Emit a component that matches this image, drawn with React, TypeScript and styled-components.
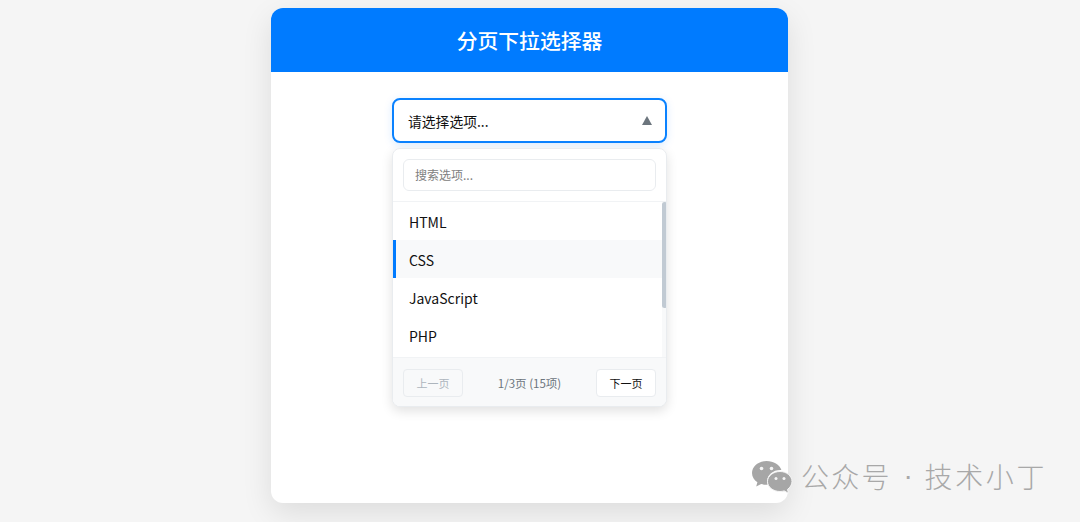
import { createGlobalStyle, styled } from "styled-components";

const GlobalStyle = createGlobalStyle`
  html, body {
    margin: 0;
    height: 522px;
    overflow: hidden;
    background: #f5f5f5;
    font-family: "Noto Sans CJK SC", "Noto Sans", sans-serif;
  }
  * {
    box-sizing: border-box;
  }
`;

const Page = styled.div`
  height: 522px;
  padding: 8px 21px 0 0;
  display: flex;
  justify-content: center;
  align-items: flex-start;
`;

const Card = styled.div`
  width: 517px;
  height: 495px;
  background: #fff;
  border-radius: 12px;
  box-shadow: 0 10px 30px rgba(0, 0, 0, 0.1);
  overflow: hidden;
`;

const Header = styled.h1`
  margin: 0;
  height: 64px;
  background: #007bff;
  color: #fff;
  font-size: 20.8px;
  font-weight: 500;
  line-height: 65px;
  text-align: center;
`;

const Body = styled.div`
  padding: 26px 121px 0;
  display: flex;
  flex-direction: column;
  gap: 5px;
`;

const Select = styled.div`
  height: 45px;
  padding: 0 14px;
  display: flex;
  align-items: center;
  justify-content: space-between;
  background: #fff;
  border: 2px solid #0a82ff;
  border-radius: 8px;
  box-shadow: 0 2px 8px rgba(0, 123, 255, 0.15);
  font-size: 13.8px;
  color: #111;
`;

const Arrow = styled.span`
  width: 0;
  height: 0;
  margin-right: -1px;
  border-left: 5.5px solid transparent;
  border-right: 5.5px solid transparent;
  border-bottom: 9px solid #6c757d;
`;

const Dropdown = styled.div`
  height: 259px;
  background: #fff;
  border: 1px solid #e9ecef;
  border-radius: 8px;
  box-shadow: 0 4px 12px rgba(0, 0, 0, 0.12);
  overflow: hidden;
  display: flex;
  flex-direction: column;
`;

const SearchBox = styled.div`
  height: 53px;
  padding: 10px 10px 0;
  border-bottom: 1px solid #f1f3f5;
`;

const SearchInput = styled.input`
  display: block;
  width: 100%;
  height: 32px;
  padding: 0 11px 2px;
  border: 1px solid #e9ecef;
  border-radius: 6px;
  outline: none;
  font-family: inherit;
  font-size: 12px;
  color: #212529;
  &::placeholder {
    color: #808080;
  }
`;

const ListArea = styled.div`
  position: relative;
  flex: 1;
  min-height: 0;
  padding-right: 4px;
  background: #f8f9fa;
`;

const List = styled.ul`
  margin: 0;
  padding: 0;
  height: 100%;
  list-style: none;
  background: #fff;
`;

const ScrollThumb = styled.div`
  position: absolute;
  top: 0;
  right: -1px;
  width: 5px;
  height: 106px;
  background: #c1cad3;
  border-radius: 3px;
`;

const Item = styled.li<{ $active?: boolean }>`
  height: 38px;
  padding: 2px 0 0 13px;
  display: flex;
  align-items: center;
  border-left: 3px solid ${(p) => (p.$active ? "#007bff" : "transparent")};
  background: ${(p) => (p.$active ? "#f8f9fa" : "#fff")};
  font-size: 14px;
  color: #111;
`;

const Footer = styled.div`
  height: 49px;
  padding: 2px 10px 0;
  display: flex;
  align-items: center;
  justify-content: space-between;
  background: #f8f9fa;
  border-top: 1px solid #f1f3f5;
`;

const PageButton = styled.button`
  width: 60px;
  height: 28px;
  padding: 0;
  background: #fff;
  border: 1px solid #e9ecef;
  border-radius: 4px;
  font-family: inherit;
  font-size: 11px;
  color: #111;
  &:disabled {
    background: #f8f9fa;
    color: #adb5bd;
  }
`;

const PageInfo = styled.span`
  font-size: 11.5px;
  color: #6c757d;
`;

const Watermark = styled.div`
  position: absolute;
  left: 751px;
  top: 459px;
  display: flex;
  align-items: center;
  color: #a8a8a8;
  font-size: 28px;
  font-weight: 300;
  letter-spacing: 2.2px;
  white-space: nowrap;
  line-height: 38px;
`;

const Label = styled.span`
  margin-top: -2px;
`;

const Account = styled(Label)`
  margin-left: 8px;
`;

const Dot = styled(Label)`
  width: 33px;
  text-align: center;
  font-family: "Liberation Sans", sans-serif;
  letter-spacing: 0;
`;

const Author = styled(Label)`
  letter-spacing: 2.6px;
`;

const options = ["HTML", "CSS", "JavaScript", "PHP"];

function WeChatIcon() {
  return (
    <svg width="42" height="34" viewBox="0 0 42 34">
      <path
        d="M15.5 1C7.5 1 1 6.3 1 13c0 3.8 2.1 7.1 5.4 9.3L5.2 26.6l5-2.6c1.7.5 3.4.8 5.3.8h1.2c-.4-1.2-.6-2.3-.6-3.5 0-6.4 6-11.3 13.300-11.300h1C28.600 4.500 22.600 1 15.500 1z"
        fill="#a6a6a6"
      />
      <path
        d="M41 21.500c0-5.400-5.300-10-12-10S16.500 16 16.500 21.500s5.600 10 12.500 10c1.400 0 2.900-.2 4.200-.6l4.300 2.400-1-3.900C39 27.600 41 24.800 41 21.500z"
        fill="#a6a6a6"
        stroke="#f5f5f5"
        strokeWidth="1"
      />
      <circle cx="10.500" cy="8.500" r="1.800" fill="#f5f5f5" />
      <circle cx="20.500" cy="8.500" r="1.800" fill="#f5f5f5" />
      <circle cx="25" cy="18.500" r="1.500" fill="#f5f5f5" />
      <circle cx="33" cy="18.500" r="1.500" fill="#f5f5f5" />
    </svg>
  );
}

export default function App() {
  return (
    <>
      <GlobalStyle />
      <Page>
        <Card>
          <Header>分页下拉选择器</Header>
          <Body>
            <Select>
              <span>请选择选项...</span>
              <Arrow />
            </Select>
            <Dropdown>
              <SearchBox>
                <SearchInput placeholder="搜索选项..." />
              </SearchBox>
              <ListArea>
                <List>
                  {options.map((o) => (
                    <Item key={o} $active={o === "CSS"}>
                      {o}
                    </Item>
                  ))}
                </List>
                <ScrollThumb />
              </ListArea>
              <Footer>
                <PageButton disabled>上一页</PageButton>
                <PageInfo>1/3页 (15项)</PageInfo>
                <PageButton>下一页</PageButton>
              </Footer>
            </Dropdown>
          </Body>
        </Card>
      </Page>
      <Watermark>
        <WeChatIcon />
        <Account>公众号</Account>
        <Dot>·</Dot>
        <Author>技术小丁</Author>
      </Watermark>
    </>
  );
}
